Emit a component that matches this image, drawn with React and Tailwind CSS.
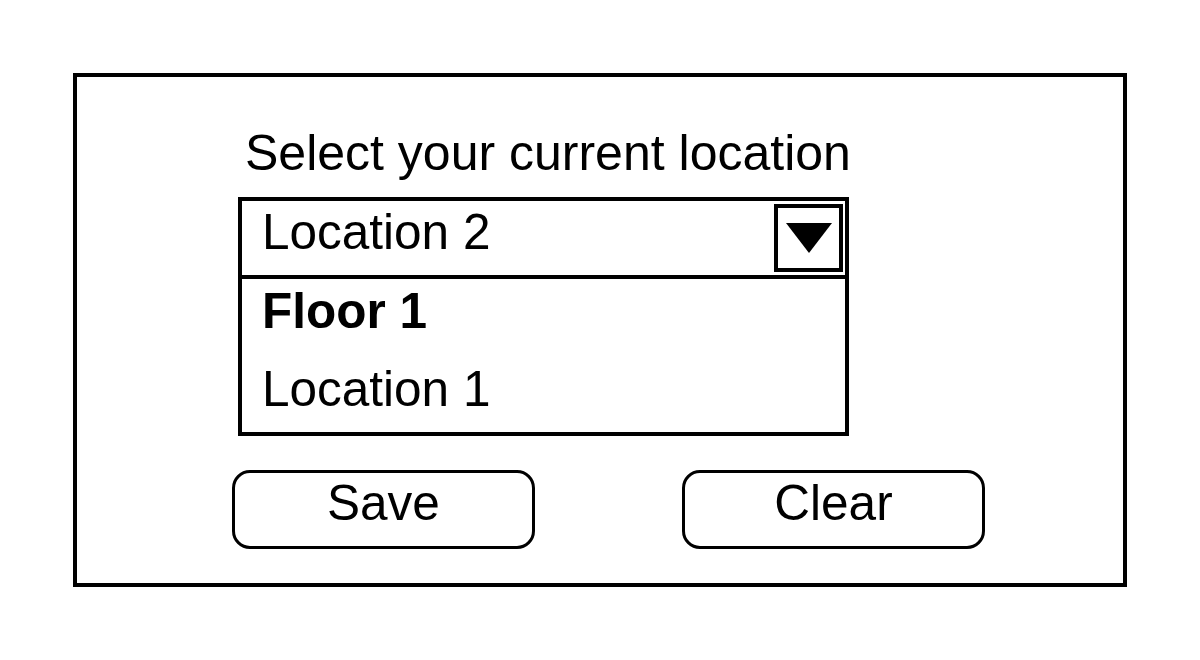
import React from 'react';

export default function App() {
  return (
    <div className="w-[1200px] h-[660px] bg-white pt-[73px] pl-[73px] font-['Liberation_Sans',Arial,sans-serif] text-black">
      <div className="w-[1054px] h-[514px] border-4 border-black flex flex-col items-start">
        <div className="mt-[51px] ml-[168px] text-[50px] leading-[50px] whitespace-nowrap">
          Select your current location
        </div>

        <div className="mt-[19px] ml-[161px] w-[611px] border-4 border-black flex flex-col">
          <div className="h-[74px] flex justify-between items-start border-b-4 border-black box-content">
            <span className="pl-[20px] pt-[6px] text-[49.5px] leading-[50px]">Location 2</span>
            <div className="mt-[3px] mr-[2px] w-[69px] h-[68px] border-4 border-black flex items-center justify-center">
              <svg width="46" height="30" viewBox="0 0 46 30">
                <polygon points="0,0 46,0 23,30" fill="#000" />
              </svg>
            </div>
          </div>
          <div className="h-[153px] flex flex-col pl-[20px] pt-[7px]">
            <span className="text-[49.5px] leading-[50px] font-bold">Floor 1</span>
            <span className="mt-[28px] text-[49.5px] leading-[50px]">Location 1</span>
          </div>
        </div>

        <div className="mt-[34px] ml-[155px] flex gap-[147px]">
          <button className="w-[303px] h-[79px] border-[3px] border-black rounded-[18px] flex justify-center items-start pt-[5px] text-[49.5px] leading-[50px]">
            Save
          </button>
          <button className="w-[303px] h-[79px] border-[3px] border-black rounded-[18px] flex justify-center items-start pt-[5px] text-[49.5px] leading-[50px]">
            Clear
          </button>
        </div>
      </div>
    </div>
  );
}
